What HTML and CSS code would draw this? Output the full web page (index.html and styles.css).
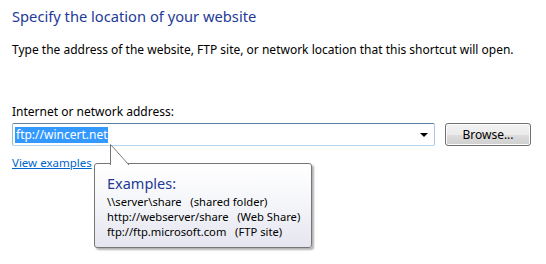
FILE: index.html
```html
<!DOCTYPE html>
<html>
<head>
    <title>Create Shortcut</title>
    <link rel="stylesheet" href="styles.css">
</head>
<body>
    <div class="page">
        <h1 class="title">Specify the location of your website</h1>
        <p class="intro">Type the address of the website, FTP site, or network location that this shortcut will open.</p>

        <label class="label" for="address">Internet or network address:</label>
        <div class="row">
            <div class="combo">
                <span class="selected">ftp://wincert.net</span>
                <span class="arrow"></span>
            </div>
            <button class="browse">Browse...</button>
        </div>

        <div class="links">
            <a class="link" href="#">View examples</a>
            <div class="tip">
                <svg class="pointer" width="22" height="21" viewBox="0 0 22 21">
                    <path d="M0.5 21 L0.5 0.5 L19 21" fill="#fff" stroke="#767676" stroke-width="1"/>
                    <path d="M1 21 L1 2 L18 21 Z" fill="#fff"/>
                </svg>
                <div class="tip-title">Examples:</div>
                <div class="tip-line">\\server\share &nbsp; (shared folder)</div>
                <div class="tip-line">http://webserver/share &nbsp; (Web Share)</div>
                <div class="tip-line">ftp://ftp.microsoft.com &nbsp; (FTP site)</div>
            </div>
        </div>
    </div>
</body>
</html>
```

FILE: styles.css
```css
body {
    margin: 0;
    background: #fff;
    font-family: "Noto Sans", "Open Sans", sans-serif;
    font-size: 12px;
    color: #000;
}
.page {
    padding: 5px 12px 0 12px;
}
.title {
    margin: 0;
    font-size: 14.7px;
    font-weight: normal;
    color: #1e3a96;
    line-height: 22px;
}
.intro {
    margin: 15px 0 0 0;
    line-height: 16px;
}
.label {
    display: block;
    margin-top: 46px;
    line-height: 16px;
}
.row {
    display: flex;
    align-items: center;
    gap: 10px;
    margin-top: 3px;
}
.combo {
    width: 415px;
    height: 21px;
    border: 1px solid #abadb3;
    border-top-color: #5f7f9f;
    border-left-color: #9fbad3;
    border-right-color: #a8c8e8;
    border-bottom-color: #b8d6ee;
    border-radius: 2px;
    display: flex;
    align-items: center;
    justify-content: space-between;
    padding: 0 4px 0 2px;
    box-sizing: content-box;
}
.selected {
    background: #3399ff;
    color: #fff;
    padding: 0 1px;
    line-height: 16px;
}
.arrow {
    width: 0;
    height: 0;
    border-left: 4px solid transparent;
    border-right: 4px solid transparent;
    border-top: 4px solid #000;
    margin-right: 2px;
}
.browse {
    width: 86px;
    height: 23px;
    font-family: inherit;
    font-size: 12px;
    color: #000;
    border: 1px solid #707070;
    border-radius: 3px;
    background: linear-gradient(#f2f2f2 0%, #ebebeb 50%, #dddddd 51%, #cfcfcf 100%);
    box-shadow: inset 0 0 0 1px #fcfcfc;
    padding: 0;
}
.links {
    position: relative;
    margin-top: 8px;
    height: 110px;
}
.link {
    color: #0066cc;
    line-height: 16px;
    font-size: 11.5px;
}
.tip {
    position: absolute;
    left: 82px;
    top: 9px;
    width: 204px;
    padding: 8px 0 8px 12px;
    border: 1px solid #767676;
    border-radius: 3px;
    background: linear-gradient(#ffffff 0%, #f4f5f9 50%, #e4e5ef 100%);
    box-shadow: 2px 2px 2px rgba(0, 0, 0, 0.3);
}
.pointer {
    position: absolute;
    left: 15px;
    top: -20px;
}
.tip-title {
    font-size: 14.5px;
    color: #1e3a96;
    line-height: 22px;
}
.tip-line {
    line-height: 15px;
    color: #000;
    font-size: 11.2px;
}
```
